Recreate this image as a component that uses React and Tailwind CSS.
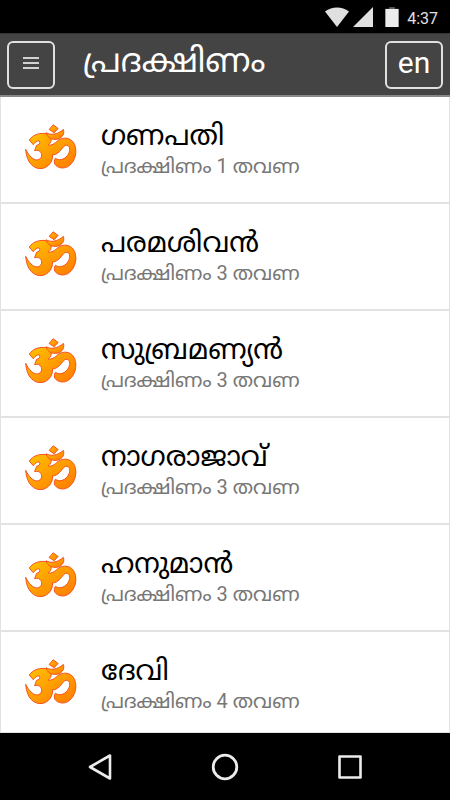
const deities = [
  { name: 'ഗണപതി', rounds: 1 },
  { name: 'പരമശിവൻ', rounds: 3 },
  { name: 'സുബ്രമണ്യൻ', rounds: 3 },
  { name: 'നാഗരാജാവ്', rounds: 3 },
  { name: 'ഹനുമാൻ', rounds: 3 },
  { name: 'ദേവി', rounds: 4 },
];

function StatusBar() {
  return (
    <div className="flex h-[33px] shrink-0 items-center justify-end bg-black pr-3 text-[#e0e0e0]">
      <svg viewBox="0 0 24 20" className="h-5 w-6" fill="currentColor" aria-hidden="true">
        <path d="M0 4.500C7-1 17-1 24 4.500L12 20Z" />
      </svg>
      <svg viewBox="0 0 20 20" className="ml-1 h-5 w-5" fill="currentColor" aria-hidden="true">
        <path d="M20 0V20H0Z" />
      </svg>
      <svg viewBox="0 0 14 21" className="ml-3 h-5 w-3.5" aria-hidden="true">
        <path d="M4 0H10V3H4Z" fill="#555" />
        <path d="M0 2H14V21H0Z" fill="#ececec" />
      </svg>
      <span className="ml-2 pt-1 text-base leading-6">4:37</span>
    </div>
  );
}

function Header() {
  return (
    <header className="flex h-16 shrink-0 items-center border-t border-b-2 border-t-[#333] border-b-[#888] bg-[#444] px-[7px] text-white">
      <button aria-label="Menu" className="flex h-12 w-12 items-center justify-center rounded-md border-2 border-[#e0e0e0] pb-1">
        <svg viewBox="0 0 16 12" className="h-3 w-4" stroke="currentColor" strokeWidth="1.6" aria-hidden="true">
          <path d="M0 1H16M0 6H16M0 11H16" />
        </svg>
      </button>
      <h1 className="ml-7 grow pb-2 text-[33px] leading-10">പ്രദക്ഷിണം</h1>
      <button className="h-12 w-[58px] rounded-md border-2 border-[#e0e0e0] pb-1 text-3xl">en</button>
    </header>
  );
}

function OmIcon() {
  return (
    <svg viewBox="19 20 157 138" className="mb-1.5 h-[46px] w-[52px] shrink-0" aria-hidden="true">
      <defs>
        <linearGradient id="flame" x1="0" y1="0" x2="1" y2="1">
          <stop offset="0" stopColor="#ffc400" />
          <stop offset="0.5" stopColor="#ff9d00" />
          <stop offset="1" stopColor="#ff7a00" />
        </linearGradient>
      </defs>
      <g fill="url(#flame)" stroke="#f4511e" strokeWidth="3" strokeLinejoin="round">
        <path d="M32 68C42 53 60 47 76 48C94 49 101 61 97 73C95 78 92 81 89 83C100 85 109 78 118 70C134 57 160 60 169 82C177 104 171 130 153 145C138 157 118 153 110 142C106 136 107 129 111 123C121 131 137 128 147 115C157 101 156 87 146 84C138 82 132 93 124 102C117 109 109 113 102 113C104 132 90 150 71 154C46 157 24 138 21 96C30 114 43 129 56 128C68 126 73 115 67 106C63 99 57 98 48 100L54 84C60 82 65 79 64 74C62 68 53 70 44 82Z" />
        <path d="M83 46C96 54 116 52 135 36C140 52 128 66 110 66C96 66 86 59 83 46Z" />
        <path d="M104 22L119 33L107 46L92 36Z" />
      </g>
    </svg>
  );
}

function DeityRow({ name, rounds }) {
  return (
    <li className="border-b-2 border-[#e2e2e2]">
      <a href="#" className="flex h-[105px] items-center px-6">
        <OmIcon />
        <div className="ml-6">
          <h2 className="text-[28px] leading-8 text-black">{name}</h2>
          <p className="text-xl leading-7 text-[#777]">പ്രദക്ഷിണം {rounds} തവണ</p>
        </div>
      </a>
    </li>
  );
}

function NavBar() {
  return (
    <nav className="flex h-[67px] shrink-0 items-center justify-between bg-black px-[86px] text-[#ececec]">
      <button aria-label="Back">
        <svg viewBox="0 0 28 28" className="h-7 w-7" fill="none" stroke="currentColor" strokeWidth="2.6" strokeLinejoin="round" aria-hidden="true">
          <path d="M24 2.500V25.500L4 14Z" />
        </svg>
      </button>
      <button aria-label="Home">
        <svg viewBox="0 0 28 28" className="h-7 w-7" fill="none" stroke="currentColor" strokeWidth="2.8" aria-hidden="true">
          <circle cx="14" cy="14" r="11.8" />
        </svg>
      </button>
      <button aria-label="Recent apps">
        <svg viewBox="0 0 28 28" className="h-7 w-7" fill="none" stroke="currentColor" strokeWidth="2.6" strokeLinejoin="round" aria-hidden="true">
          <path d="M3.500 3.500H24.500V24.500H3.500Z" />
        </svg>
      </button>
    </nav>
  );
}

export default function App() {
  return (
    <div className="flex h-screen flex-col bg-white font-[Roboto,'Noto_Sans_Malayalam','Noto_Sans',sans-serif]">
      <StatusBar />
      <Header />
      <main className="min-h-0 grow overflow-hidden border-x border-b border-[#e2e2e2]">
        <ul>
          {deities.map((deity) => (
            <DeityRow key={deity.name} name={deity.name} rounds={deity.rounds} />
          ))}
        </ul>
      </main>
      <NavBar />
    </div>
  );
}
